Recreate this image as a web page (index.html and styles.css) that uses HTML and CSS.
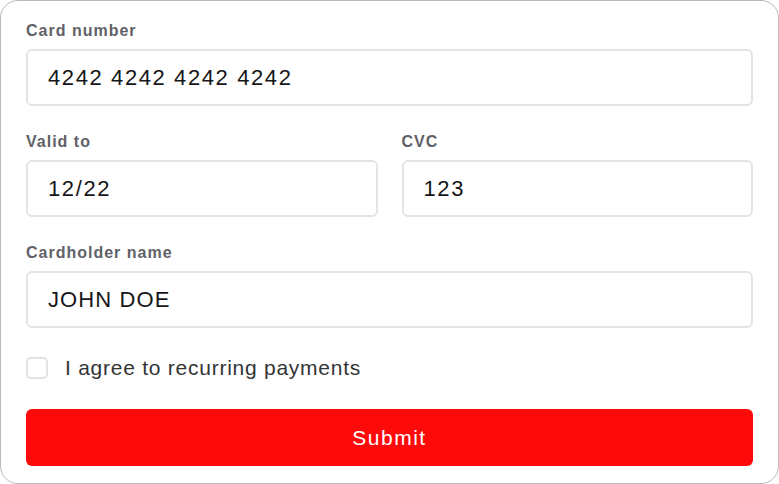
FILE: index.html
```html
<!DOCTYPE html>
<html lang="en">
<head>
  <meta charset="UTF-8" />
  <meta name="viewport" content="width=device-width, initial-scale=1.0"/>
  <title>Payment</title>
  <link rel="stylesheet" href="styles.css">
</head>
<body>
  <form class="card-form" onsubmit="return false">
    <!-- Card number -->
    <div class="field">
      <label for="cardNumber">Card number</label>
      <input type="text" id="cardNumber" value="4242 4242 4242 4242" />
    </div>

    <!-- Expiry + CVC -->
    <div class="field-row">
      <div class="field">
        <label for="validTo">Valid to</label>
        <input type="text" id="validTo" value="12/22" />
      </div>
      <div class="field">
        <label for="cvc">CVC</label>
        <input type="text" id="cvc" value="123" />
      </div>
    </div>

    <div class="field field-last">
      <label for="holder">Cardholder name</label>
      <input type="text" id="holder" value="JOHN DOE" />
    </div>

    <label class="agree">
      <input type="checkbox" class="agree-box" />
      <span>I agree to recurring payments</span>
    </label>

    <button type="submit" class="submit-btn">Submit</button>
  </form>
</body>
</html>
```

FILE: styles.css
```css
* {
  box-sizing: border-box;
}

body {
  margin: 0;
  background: #ffffff;
  font-family: 'Liberation Sans', Arial, sans-serif;
}

.card-form {
  width: 779px;
  height: 484px;
  border: 1px solid #b9b9b9;
  border-radius: 18px;
  padding: 20px 25px 0 25px;
  display: flex;
  flex-direction: column;
}

.field {
  display: flex;
  flex-direction: column;
  margin-bottom: 26px;
}

.field-last {
  margin-bottom: 29px;
}

.field-row {
  display: grid;
  grid-template-columns: 1fr 1fr;
  gap: 24px;
}

.field label {
  font-size: 16px;
  line-height: 20px;
  font-weight: bold;
  color: #5f6167;
  letter-spacing: 1px;
  margin-bottom: 8px;
}

.field input {
  height: 57px;
  width: 100%;
  border: 2px solid #e2e4e7;
  border-radius: 6px;
  padding: 0 20px;
  font-family: inherit;
  font-size: 22px;
  letter-spacing: 1.6px;
  color: #161618;
  background: #fff;
  outline: none;
}

#holder {
  letter-spacing: 1.1px;
}

/* checkbox row */
.agree {
  display: flex;
  align-items: center;
  gap: 17px;
  height: 22px;
  margin-bottom: 30px;
  font-size: 21px;
  letter-spacing: 0.75px;
  color: #333436;
  cursor: pointer;
}

.agree-box {
  appearance: none;
  -webkit-appearance: none;
  margin: 0;
  width: 22px;
  height: 22px;
  border: 2px solid #e0e2e6;
  border-radius: 5px;
  background: #fff;
}

.submit-btn {
  height: 57px;
  width: 100%;
  border: none;
  border-radius: 6px;
  background: #fe0a0a;
  color: #ffffff;
  font-family: inherit;
  font-size: 21px;
  letter-spacing: 1.5px;
  cursor: pointer;
}
```
